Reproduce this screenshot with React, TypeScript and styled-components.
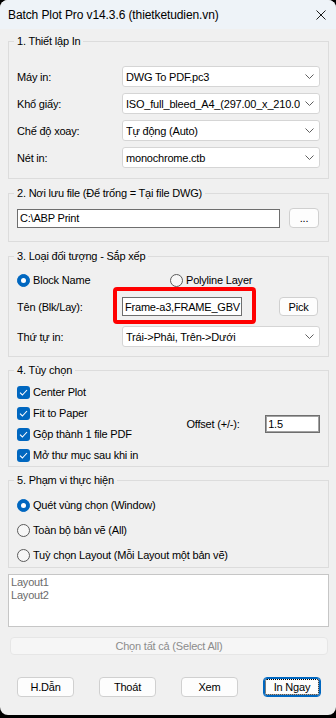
import { FunctionComponent, ReactNode } from 'react'
import styled, { createGlobalStyle } from 'styled-components'

const GlobalStyle = createGlobalStyle`
    * {
        box-sizing: border-box;
    }
    html,
    body {
        margin: 0;
        padding: 0;
        background: #000;
    }
    body {
        font-family: 'Liberation Sans', Arial, sans-serif;
        font-size: 11px;
        letter-spacing: -0.2px;
        color: #000;
    }
`

const Window = styled.div`
    width: 336px;
    height: 715px;
    display: flex;
    flex-direction: column;
    background: #f0f0f0;
    border-radius: 8px;
    overflow: hidden;
`

const TitleBar = styled.div`
    height: 29px;
    flex: none;
    display: flex;
    align-items: center;
    justify-content: space-between;
    padding: 0 10px 0 8px;
    background: #eef3f8;
    font-size: 12px;
    letter-spacing: -0.1px;
`

const Body = styled.div`
    display: flex;
    flex-direction: column;
    padding: 0 7px 0 8px;
`

const Group = styled.fieldset<{ $top: number; $padding: string }>`
    margin: ${({ $top }) => $top}px 0 0;
    padding: ${({ $padding }) => $padding};
    min-width: 0;
    border: 1px solid #dcdcdc;
`

const Legend = styled.legend`
    padding: 0 3px;
    margin-left: -3px;
    line-height: 16px;
`

const FieldGrid = styled.div`
    display: grid;
    grid-template-columns: 105px 198px;
    grid-auto-rows: 21px;
    row-gap: 6px;
    align-items: center;
`

const Combo = styled.div`
    height: 21px;
    display: flex;
    align-items: center;
    gap: 5px;
    padding: 0 5px 0 3px;
    background: #fff;
    border: 1px solid #d5d5d5;
    border-radius: 3px;
`

const ComboText = styled.span`
    flex: 1;
    overflow: hidden;
    white-space: nowrap;
`

const TextBox = styled.div<{ $width: number }>`
    width: ${({ $width }) => $width}px;
    height: 19px;
    display: flex;
    align-items: center;
    padding: 0 2px;
    background: #fff;
    border: 1px solid #6e6e6e;
    white-space: nowrap;
    overflow: hidden;
`

const Button = styled.div<{ $width: number; $height?: number; $focused?: boolean }>`
    position: relative;
    width: ${({ $width }) => $width}px;
    height: ${({ $height }) => $height ?? 20}px;
    flex: none;
    display: flex;
    align-items: center;
    justify-content: center;
    background: #fdfdfd;
    border: 1px solid ${({ $focused }) => ($focused ? '#0067c0' : '#d0d0d0')};
    border-radius: 4px;
    box-shadow: ${({ $focused }) => ($focused ? 'inset 0 0 0 1px #0067c0' : 'none')};

    &::after {
        content: '';
        display: ${({ $focused }) => ($focused ? 'block' : 'none')};
        position: absolute;
        inset: 1px;
        border: 1px dotted #000;
        border-radius: 2px;
    }
`

const PathRow = styled.div`
    height: 20px;
    display: flex;
    align-items: center;
    gap: 9px;
`

const RadioRow = styled.div`
    height: 16px;
    display: grid;
    grid-template-columns: 153px 1fr;
    align-items: center;
`

const NameRow = styled.div`
    height: 21px;
    margin: 8px 0 9px;
    display: flex;
    align-items: center;
`

const RowLabel = styled.span`
    width: 105px;
    flex: none;
`

const Marked = styled.div`
    position: relative;
    margin-right: 37px;
`

const RedFrame = styled.div`
    position: absolute;
    top: -10px;
    left: -9px;
    right: -14px;
    bottom: -8px;
    border: 4px solid #f00;
    border-radius: 4px;
    pointer-events: none;
`

const Choice = styled.label`
    height: 16px;
    display: flex;
    align-items: center;
    gap: 3px;
    white-space: nowrap;
`

const RadioMark = styled.span<{ $on?: boolean }>`
    width: 13px;
    height: 13px;
    flex: none;
    display: flex;
    align-items: center;
    justify-content: center;
    border-radius: 50%;
    background: ${({ $on }) => ($on ? '#0067c0' : '#f7f7f7')};
    border: 1px solid ${({ $on }) => ($on ? '#0067c0' : '#5b5b5b')};

    &::after {
        content: '';
        display: ${({ $on }) => ($on ? 'block' : 'none')};
        width: 5px;
        height: 5px;
        border-radius: 50%;
        background: #fff;
    }
`

const CheckMark = styled.span`
    width: 13px;
    height: 13px;
    flex: none;
    display: flex;
    align-items: center;
    justify-content: center;
    background: #0067c0;
    border-radius: 3px;
`

const OptionsBody = styled.div`
    display: flex;
    align-items: center;
`

const CheckList = styled.div`
    width: 170px;
    display: flex;
    flex-direction: column;
    gap: 5px;
`

const OffsetLabel = styled.span`
    width: 79px;
`

const OffsetInput = styled(TextBox)`
    height: 18px;
    box-shadow: inset 0 0 0 1px #a2a2a2;
`

const RadioList = styled.div`
    display: flex;
    flex-direction: column;
    gap: 9px;
`

const ListBox = styled.div`
    height: 53px;
    margin-top: 6px;
    padding: 1px 2px;
    background: #fff;
    border: 1px solid #c6c6c6;
    color: #6b6b6b;
    line-height: 13px;
`

const SelectAll = styled.div`
    height: 18px;
    margin: 10px 1px 0 2px;
    display: flex;
    align-items: center;
    justify-content: center;
    background: #f6f6f6;
    border: 1px solid #e6e6e6;
    border-radius: 4px;
    color: #8c8c8c;
`

const Footer = styled.div`
    margin-top: 22px;
    padding-left: 9px;
    display: flex;
    gap: 25px;
`

const Chevron: FunctionComponent = () => (
    <svg width="9" height="5" viewBox="0 0 9 5" fill="none">
        <path d="M0.5 0.5 L4.5 4.5 L8.5 0.5" stroke="#5f5f5f" strokeWidth="1" />
    </svg>
)

const Select: FunctionComponent<{ value: string }> = ({ value }) => (
    <Combo>
        <ComboText>{value}</ComboText>
        <Chevron />
    </Combo>
)

const Radio: FunctionComponent<{ on?: boolean; children: ReactNode }> = ({ on, children }) => (
    <Choice>
        <RadioMark $on={on} />
        {children}
    </Choice>
)

const Check: FunctionComponent<{ children: ReactNode }> = ({ children }) => (
    <Choice>
        <CheckMark>
            <svg width="9" height="7" viewBox="0 0 9 7" fill="none">
                <path d="M1 3.6 L3.4 6 L8 1" stroke="#fff" strokeWidth="1.1" />
            </svg>
        </CheckMark>
        {children}
    </Choice>
)

const settings = [
    ['Máy in:', 'DWG To PDF.pc3'],
    ['Khổ giấy:', 'ISO_full_bleed_A4_(297.00_x_210.00_MM)'],
    ['Chế độ xoay:', 'Tự động (Auto)'],
    ['Nét in:', 'monochrome.ctb'],
]

const options = ['Center Plot', 'Fit to Paper', 'Gộp thành 1 file PDF', 'Mở thư mục sau khi in']

const App: FunctionComponent = () => (
    <>
        <GlobalStyle />
        <Window>
            <TitleBar>
                <span>Batch Plot Pro v14.3.6 (thietketudien.vn)</span>
                <svg width="10" height="10" viewBox="0 0 10 10">
                    <path d="M0.5 0.5 L9.5 9.5 M9.5 0.5 L0.5 9.5" stroke="#1a1a1a" strokeWidth="1" />
                </svg>
            </TitleBar>
            <Body>
                <Group $top={4} $padding="17px 8px 10px">
                    <Legend>1. Thiết lập In</Legend>
                    <FieldGrid>
                        {settings.map(([label, value]) => (
                            <>
                                <span key={`${label}-l`}>{label}</span>
                                <Select key={`${label}-v`} value={value} />
                            </>
                        ))}
                    </FieldGrid>
                </Group>

                <Group $top={6} $padding="7px 9px 13px 8px">
                    <Legend>2. Nơi lưu file (Để trống = Tại file DWG)</Legend>
                    <PathRow>
                        <TextBox $width={263}>C:\ABP Print</TextBox>
                        <Button $width={30}>...</Button>
                    </PathRow>
                </Group>

                <Group $top={6} $padding="8px 8px 9px">
                    <Legend>3. Loại đối tượng - Sắp xếp</Legend>
                    <RadioRow>
                        <Radio on>Block Name</Radio>
                        <Radio>Polyline Layer</Radio>
                    </RadioRow>
                    <NameRow>
                        <RowLabel>Tên (Blk/Lay):</RowLabel>
                        <Marked>
                            <TextBox $width={120}>Frame-a3,FRAME_GBV</TextBox>
                            <RedFrame />
                        </Marked>
                        <Button $width={39} $height={19}>
                            Pick
                        </Button>
                    </NameRow>
                    <FieldGrid>
                        <span>Thứ tự in:</span>
                        <Select value="Trái->Phải, Trên->Dưới" />
                    </FieldGrid>
                </Group>

                <Group $top={5} $padding="6px 8px 3px">
                    <Legend>4. Tùy chọn</Legend>
                    <OptionsBody>
                        <CheckList>
                            {options.map((option) => (
                                <Check key={option}>{option}</Check>
                            ))}
                        </CheckList>
                        <OffsetLabel>Offset (+/-):</OffsetLabel>
                        <OffsetInput $width={55}>1.5</OffsetInput>
                    </OptionsBody>
                </Group>

                <Group $top={5} $padding="9px 8px 4px">
                    <Legend>5. Phạm vi thực hiện</Legend>
                    <RadioList>
                        <Radio on>Quét vùng chọn (Window)</Radio>
                        <Radio>Toàn bộ bản vẽ (All)</Radio>
                        <Radio>Tuỳ chọn Layout (Mỗi Layout một bản vẽ)</Radio>
                    </RadioList>
                </Group>

                <ListBox>
                    <div>Layout1</div>
                    <div>Layout2</div>
                </ListBox>

                <SelectAll>Chọn tất cả (Select All)</SelectAll>

                <Footer>
                    <Button $width={57}>H.Dẫn</Button>
                    <Button $width={57}>Thoát</Button>
                    <Button $width={57}>Xem</Button>
                    <Button $width={58} $focused>
                        In Ngay
                    </Button>
                </Footer>
            </Body>
        </Window>
    </>
)

export default App
